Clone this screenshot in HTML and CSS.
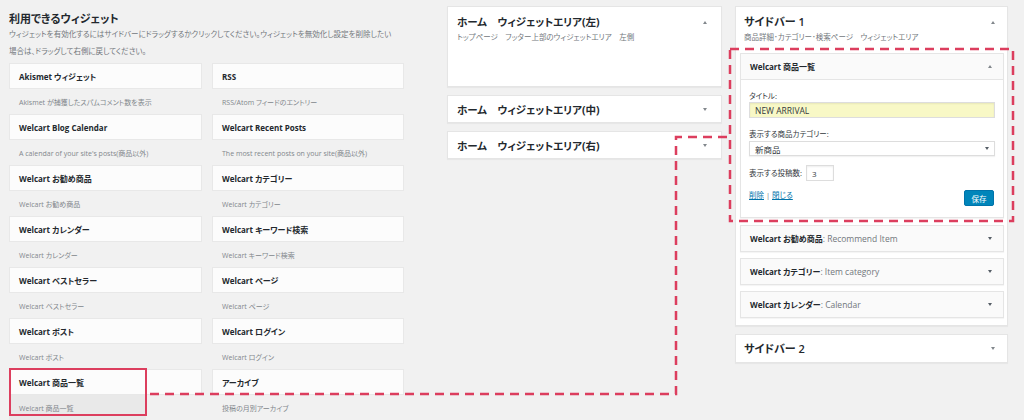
FILE: index.html
```html
<!DOCTYPE html>
<html>
  <head>
    <meta charset="utf-8">
    <link rel="stylesheet" href="styles.css">
  </head>
  <body>
    <div class="screen">
      <div class="available">
        <h2 class="avail-title">利用できるウィジェット</h2>
        <p class="avail-desc">ウィジェットを有効化するにはサイドバーにドラッグするかクリックしてください。ウィジェットを無効化し設定を削除したい<br>場合は、ドラッグして右側に戻してください。</p>
        <div class="widget-list">
          <div class="widget">
            <div class="widget-top">Akismet ウィジェット</div>
            <div class="widget-desc">Akismet が捕獲したスパムコメント数を表示</div>
          </div>
          <div class="widget">
            <div class="widget-top">RSS</div>
            <div class="widget-desc">RSS/Atom フィードのエントリー</div>
          </div>
          <div class="widget">
            <div class="widget-top">Welcart Blog Calendar</div>
            <div class="widget-desc">A calendar of your site's posts(商品以外)</div>
          </div>
          <div class="widget">
            <div class="widget-top">Welcart Recent Posts</div>
            <div class="widget-desc">The most recent posts on your site(商品以外)</div>
          </div>
          <div class="widget">
            <div class="widget-top">Welcart お勧め商品</div>
            <div class="widget-desc">Welcart お勧め商品</div>
          </div>
          <div class="widget">
            <div class="widget-top">Welcart カテゴリー</div>
            <div class="widget-desc">Welcart カテゴリー</div>
          </div>
          <div class="widget">
            <div class="widget-top">Welcart カレンダー</div>
            <div class="widget-desc">Welcart カレンダー</div>
          </div>
          <div class="widget">
            <div class="widget-top">Welcart キーワード検索</div>
            <div class="widget-desc">Welcart キーワード検索</div>
          </div>
          <div class="widget">
            <div class="widget-top">Welcart ベストセラー</div>
            <div class="widget-desc">Welcart ベストセラー</div>
          </div>
          <div class="widget">
            <div class="widget-top">Welcart ページ</div>
            <div class="widget-desc">Welcart ページ</div>
          </div>
          <div class="widget">
            <div class="widget-top">Welcart ポスト</div>
            <div class="widget-desc">Welcart ポスト</div>
          </div>
          <div class="widget">
            <div class="widget-top">Welcart ログイン</div>
            <div class="widget-desc">Welcart ログイン</div>
          </div>
          <div class="widget">
            <div class="widget-top">Welcart 商品一覧</div>
            <div class="widget-desc picked">Welcart 商品一覧</div>
          </div>
          <div class="widget">
            <div class="widget-top">アーカイブ</div>
            <div class="widget-desc">投稿の月別アーカイブ</div>
          </div>
        </div>
      </div>

      <div class="areas">
        <div class="area area-open">
          <div class="area-head">
            <span>ホーム　ウィジェットエリア(左)</span>
            <span class="arrow-up"></span>
          </div>
          <div class="area-desc">トップページ　フッター上部のウィジェットエリア　左側</div>
        </div>
        <div class="area">
          <div class="area-head">
            <span>ホーム　ウィジェットエリア(中)</span>
            <span class="arrow-down"></span>
          </div>
        </div>
        <div class="area">
          <div class="area-head">
            <span>ホーム　ウィジェットエリア(右)</span>
            <span class="arrow-down"></span>
          </div>
        </div>
      </div>

      <div class="sidebars">
        <div class="sb-box">
          <div class="sb-head">
            <span>サイドバー 1</span>
            <span class="arrow-up"></span>
          </div>
          <div class="sb-desc">商品詳細･カテゴリー･検索ページ　ウィジェットエリア</div>
          <div class="sb-widgets">
            <div class="sb-widget sb-widget-open">
              <div class="sb-widget-head">
                <span>Welcart 商品一覧</span>
                <span class="arrow-up"></span>
              </div>
              <div class="sb-widget-body">
                <div class="form-label">タイトル:</div>
                <input class="text-field autofill" type="text" value="NEW ARRIVAL">
                <div class="form-label">表示する商品カテゴリー:</div>
                <div class="select-field">
                  <span>新商品</span>
                  <span class="arrow-down dark"></span>
                </div>
                <div class="form-row">
                  <span class="form-label inline">表示する投稿数:</span>
                  <input class="text-field count" type="text" value="3">
                </div>
                <div class="form-actions">
                  <div class="form-links"><a href="#">削除</a> | <a href="#">閉じる</a></div>
                  <button class="btn-save">保存</button>
                </div>
              </div>
            </div>
            <div class="sb-widget">
              <div class="sb-widget-head">
                <span>Welcart お勧め商品<span class="in-title">: Recommend Item</span></span>
                <span class="arrow-down dark"></span>
              </div>
            </div>
            <div class="sb-widget">
              <div class="sb-widget-head">
                <span>Welcart カテゴリー<span class="in-title">: Item category</span></span>
                <span class="arrow-down dark"></span>
              </div>
            </div>
            <div class="sb-widget">
              <div class="sb-widget-head">
                <span>Welcart カレンダー<span class="in-title">: Calendar</span></span>
                <span class="arrow-down dark"></span>
              </div>
            </div>
          </div>
        </div>
        <div class="sb-box sb-closed">
          <div class="sb-head">
            <span>サイドバー 2</span>
            <span class="arrow-down"></span>
          </div>
        </div>
      </div>

      <!-- annotation: drag from the list into sidebar 1 -->
      <svg class="guide" width="1024" height="420" viewBox="0 0 1024 420">
        <rect x="10" y="369" width="136" height="46" fill="none" stroke="#dc3e5e" stroke-width="2"/>
        <path d="M150 394 H676 V137 H730" fill="none" stroke="#dc3e5e" stroke-width="2.5" stroke-dasharray="9 6"/>
        <rect x="730" y="49" width="283" height="172" fill="none" stroke="#dc3e5e" stroke-width="2.5" stroke-dasharray="9 6"/>
      </svg>
    </div>
  </body>
</html>
```

FILE: styles.css
```css
body {
  margin: 0;
  background-color: #f1f1f1;
  font-family: "Open Sans", "Noto Sans CJK JP", sans-serif;
  font-feature-settings: "palt";
  color: #23282d;
}
.screen {
  position: relative;
  width: 1024px;
  height: 420px;
  overflow: hidden;
  display: flex;
  align-items: flex-start;
}

/* available widgets */
.available {
  width: 395px;
  margin-left: 9px;
  padding-top: 12px;
}
.avail-title {
  height: 14px;
  margin: 0;
  font-size: 11px;
  line-height: 14px;
  font-weight: 600;
}
.avail-desc {
  height: 33px;
  margin: 0;
  font-size: 7.5px;
  line-height: 16.5px;
  color: #72777c;
}
.widget-list {
  display: grid;
  grid-template-columns: 193px 192px;
  column-gap: 10px;
  margin-top: 4px;
}
.widget-top {
  height: 26px;
  box-sizing: border-box;
  display: flex;
  align-items: center;
  padding: 0 9px;
  background-color: #fcfcfc;
  border: 1px solid #e8e8e8;
  font-size: 8px;
  font-weight: 700;
}
.widget-desc {
  height: 25px;
  display: flex;
  align-items: center;
  padding: 0 10px;
  font-size: 7px;
  color: #82878c;
}
.widget-desc.picked {
  background: linear-gradient(to right, #e9e9e9 137px, transparent 137px);
}

/* home widget areas */
.areas {
  width: 275px;
  margin-left: 43px;
  padding-top: 6px;
  display: flex;
  flex-direction: column;
  gap: 8px;
}
.area {
  box-sizing: border-box;
  background-color: white;
  border: 1px solid #e5e5e5;
  box-shadow: 0 1px 1px rgba(0, 0, 0, 0.04);
}
.area-open {
  height: 81px;
}
.area-head {
  height: 26px;
  display: flex;
  align-items: center;
  justify-content: space-between;
  padding: 0 14px 0 9px;
  font-size: 10.5px;
  font-weight: 700;
}
.area-open .area-head,
.sb-head {
  height: 14px;
  padding-top: 8px;
  line-height: 14px;
}
.area-desc,
.sb-desc {
  height: 12px;
  margin-top: 2px;
  padding-left: 9px;
  font-size: 7.5px;
  line-height: 12px;
  color: #72777c;
}

/* sidebars */
.sidebars {
  width: 273px;
  margin-left: 13px;
  padding-top: 6px;
  display: flex;
  flex-direction: column;
  gap: 8px;
}
.sb-box {
  background-color: white;
  border: 1px solid #e5e5e5;
  box-shadow: 0 1px 1px rgba(0, 0, 0, 0.04);
  padding: 0 3px 7px 4px;
}
.sb-head {
  display: flex;
  align-items: center;
  justify-content: space-between;
  padding: 8px 9px 0 4px;
  font-size: 11px;
  font-weight: 600;
}
.sb-desc {
  padding-left: 4px;
}
.sb-closed {
  padding-bottom: 0;
}
.sb-closed .sb-head {
  height: 27px;
  padding-top: 0;
}
.sb-widgets {
  margin-top: 10px;
  display: flex;
  flex-direction: column;
  gap: 6px;
}
.sb-widget {
  border: 1px solid #e5e5e5;
  background-color: #fafafa;
  box-shadow: 0 1px 1px rgba(0, 0, 0, 0.04);
}
.sb-widget-open {
  margin-bottom: 1px;
  background-color: white;
}
.sb-widget-head {
  height: 25px;
  display: flex;
  align-items: center;
  justify-content: space-between;
  padding: 0 11px 0 9px;
  background-color: #fafafa;
  font-size: 8px;
  font-weight: 700;
}
.sb-widget-open .sb-widget-head {
  border-bottom: 1px solid #e5e5e5;
}
.in-title {
  font-size: 8.5px;
  font-weight: 400;
  color: #72777c;
}
.sb-widget-body {
  padding: 0 8px 11px 8px;
  font-size: 7.5px;
}
.form-label {
  height: 12px;
  margin-top: 10px;
  line-height: 12px;
  color: #32373c;
}
.form-label.inline {
  margin: 0 4px 0 0;
}
.text-field {
  display: block;
  box-sizing: border-box;
  width: 100%;
  height: 16px;
  margin: 0;
  padding: 0 5px;
  border: 1px solid #ddd;
  box-shadow: inset 0 1px 2px rgba(0, 0, 0, 0.07);
  font-family: inherit;
  font-size: 8.5px;
  color: #32373c;
  background-color: white;
}
.text-field.autofill {
  background-color: #f8f8c6;
}
.text-field.count {
  width: 28px;
  font-size: 8px;
}
.select-field {
  box-sizing: border-box;
  height: 15px;
  margin-top: 1px;
  display: flex;
  align-items: center;
  justify-content: space-between;
  padding: 0 5px 0 5px;
  border: 1px solid #ddd;
  box-shadow: 0 1px 1px rgba(0, 0, 0, 0.05);
  font-size: 8.5px;
  color: #32373c;
}
.form-row {
  height: 16px;
  margin-top: 9px;
  display: flex;
  align-items: center;
}
.form-actions {
  height: 16px;
  margin-top: 9px;
  display: flex;
  justify-content: space-between;
  align-items: flex-start;
}
.form-links {
  line-height: 11px;
  color: #72777c;
}
.form-links a {
  color: #0073aa;
}
.btn-save {
  width: 30px;
  height: 16px;
  margin-right: 1px;
  padding: 0;
  border: 1px solid #0073aa;
  border-radius: 2px;
  background-color: #0085ba;
  color: white;
  font-family: inherit;
  font-size: 7.5px;
}

/* small toggle triangles */
.arrow-up,
.arrow-down {
  width: 0;
  height: 0;
  border-left: 2.5px solid transparent;
  border-right: 2.5px solid transparent;
}
.arrow-up {
  border-bottom: 3.5px solid #82878c;
}
.arrow-down {
  border-top: 3.5px solid #82878c;
}
.arrow-down.dark {
  border-top-color: #555d66;
}

.guide {
  position: absolute;
  top: 0;
  left: 0;
  pointer-events: none;
}
```
